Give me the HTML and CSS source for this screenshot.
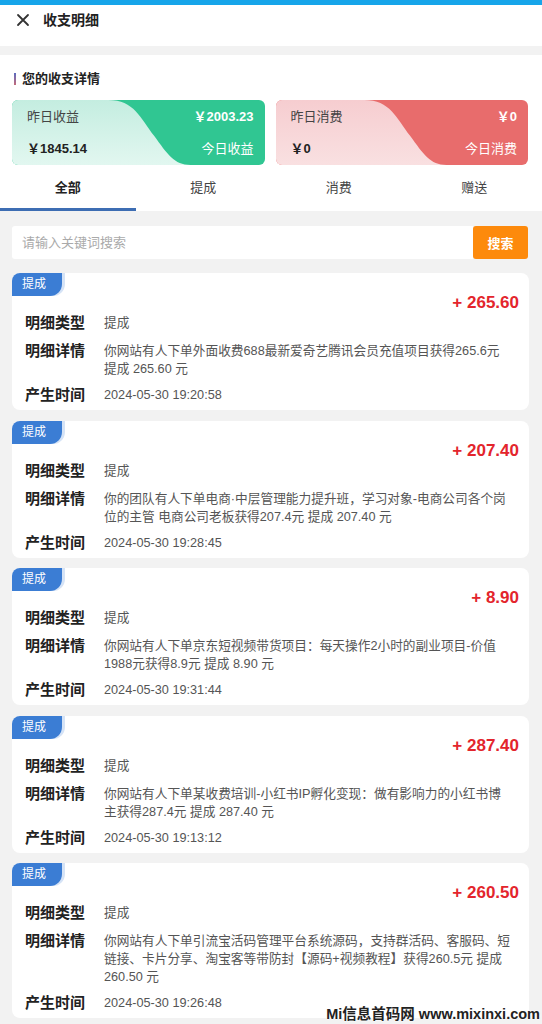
FILE: index.html
```html
<!DOCTYPE html>
<html lang="zh-CN">
<head>
    <meta charset="UTF-8">
    <meta name="viewport" content="width=device-width, initial-scale=1.0">
    <title>收支明细</title>
    <link rel="stylesheet" href="styles.css">
</head>
<body>
    <div class="page">
        <div class="topbar"></div>
        <div class="header">
            <svg class="close-icon" width="14" height="14" viewBox="0 0 14 14">
                <path d="M2 2 L12 12 M12 2 L2 12" stroke="#333" stroke-width="1.8" stroke-linecap="round"/>
            </svg>
            <span class="header-title">收支明细</span>
        </div>

        <!-- summary section -->
        <div class="summary">
            <div class="summary-title">您的收支详情</div>
            <div class="stat-cards">
                <div class="stat-card green">
                    <svg class="stat-bg" viewBox="0 0 252 65" preserveAspectRatio="none">
                        <defs>
                            <linearGradient id="gLight" x1="0" y1="0" x2="0" y2="1">
                                <stop offset="0" stop-color="#c4ede0"/>
                                <stop offset="1" stop-color="#e2f7f0"/>
                            </linearGradient>
                        </defs>
                        <path d="M0 0 H96 C122 0 128 18 142 36 C155 54 162 65 178 65 H0 Z" fill="url(#gLight)"/>
                    </svg>
                    <div class="stat-row">
                        <span class="stat-label">昨日收益</span>
                        <span class="stat-value light">￥2003.23</span>
                    </div>
                    <div class="stat-row">
                        <span class="stat-value">￥1845.14</span>
                        <span class="stat-label light">今日收益</span>
                    </div>
                </div>
                <div class="stat-card red">
                    <svg class="stat-bg" viewBox="0 0 252 65" preserveAspectRatio="none">
                        <defs>
                            <linearGradient id="rLight" x1="0" y1="0" x2="0" y2="1">
                                <stop offset="0" stop-color="#f6cdd0"/>
                                <stop offset="1" stop-color="#f9e0e1"/>
                            </linearGradient>
                        </defs>
                        <path d="M0 0 H88 C114 0 120 18 134 36 C147 54 154 65 170 65 H0 Z" fill="url(#rLight)"/>
                    </svg>
                    <div class="stat-row">
                        <span class="stat-label">昨日消费</span>
                        <span class="stat-value light">￥0</span>
                    </div>
                    <div class="stat-row">
                        <span class="stat-value">￥0</span>
                        <span class="stat-label light">今日消费</span>
                    </div>
                </div>
            </div>
            <div class="tabs">
                <div class="tab active">全部</div>
                <div class="tab">提成</div>
                <div class="tab">消费</div>
                <div class="tab">赠送</div>
            </div>
        </div>

        <!-- search -->
        <div class="search">
            <input type="text" class="search-input" placeholder="请输入关键词搜索">
            <button class="search-btn">搜索</button>
        </div>

        <!-- records -->
        <div class="record">
            <span class="badge">提成</span>
            <div class="amount">+ 265.60</div>
            <div class="row"><span class="label">明细类型</span><span class="value">提成</span></div>
            <div class="row"><span class="label">明细详情</span><span class="value">你网站有人下单外面收费688最新爱奇艺腾讯会员充值项目获得265.6元<br>提成 265.60 元</span></div>
            <div class="row"><span class="label">产生时间</span><span class="value">2024-05-30 19:20:58</span></div>
        </div>

        <div class="record">
            <span class="badge">提成</span>
            <div class="amount">+ 207.40</div>
            <div class="row"><span class="label">明细类型</span><span class="value">提成</span></div>
            <div class="row"><span class="label">明细详情</span><span class="value">你的团队有人下单电商·中层管理能力提升班，学习对象-电商公司各个岗<br>位的主管 电商公司老板获得207.4元 提成 207.40 元</span></div>
            <div class="row"><span class="label">产生时间</span><span class="value">2024-05-30 19:28:45</span></div>
        </div>

        <div class="record">
            <span class="badge">提成</span>
            <div class="amount">+ 8.90</div>
            <div class="row"><span class="label">明细类型</span><span class="value">提成</span></div>
            <div class="row"><span class="label">明细详情</span><span class="value">你网站有人下单京东短视频带货项目：每天操作2小时的副业项目-价值<br>1988元获得8.9元 提成 8.90 元</span></div>
            <div class="row"><span class="label">产生时间</span><span class="value">2024-05-30 19:31:44</span></div>
        </div>

        <div class="record">
            <span class="badge">提成</span>
            <div class="amount">+ 287.40</div>
            <div class="row"><span class="label">明细类型</span><span class="value">提成</span></div>
            <div class="row"><span class="label">明细详情</span><span class="value">你网站有人下单某收费培训-小红书IP孵化变现：做有影响力的小红书博<br>主获得287.4元 提成 287.40 元</span></div>
            <div class="row"><span class="label">产生时间</span><span class="value">2024-05-30 19:13:12</span></div>
        </div>

        <div class="record">
            <span class="badge">提成</span>
            <div class="amount">+ 260.50</div>
            <div class="row"><span class="label">明细类型</span><span class="value">提成</span></div>
            <div class="row"><span class="label">明细详情</span><span class="value">你网站有人下单引流宝活码管理平台系统源码，支持群活码、客服码、短<br>链接、卡片分享、淘宝客等带防封【源码+视频教程】获得260.5元 提成<br>260.50 元</span></div>
            <div class="row"><span class="label">产生时间</span><span class="value">2024-05-30 19:26:48</span></div>
        </div>

        <div class="watermark">Mi信息首码网 www.mixinxi.com</div>
    </div>
</body>
</html>
```

FILE: styles.css
```css
html, body {
    margin: 0;
    padding: 0;
    overflow: hidden;
}

body {
    background-color: #f2f2f2;
    font-family: "Liberation Sans", "Noto Sans CJK SC", sans-serif;
    color: #333;
}

.page {
    position: relative;
    width: 542px;
    height: 1024px;
    overflow: hidden;
}

.topbar {
    height: 5px;
    background-color: #16a5ea;
}

.header {
    height: 41px;
    background-color: #fff;
    display: flex;
    align-items: flex-start;
    padding: 0 16px;
    margin-bottom: 9px;
}

.close-icon {
    margin-top: 8px;
    margin-right: 13px;
}

.header-title {
    font-size: 14px;
    font-weight: bold;
    line-height: 30px;
    color: #222;
}

/* summary block */
.summary {
    background-color: #fff;
    padding-top: 15px;
}

.summary-title {
    font-size: 13px;
    font-weight: bold;
    line-height: 18px;
    color: #222;
    padding-left: 22px;
    position: relative;
}

.summary-title::before {
    content: "";
    position: absolute;
    left: 14px;
    top: 3px;
    width: 2px;
    height: 12px;
    background: linear-gradient(#5a6bc0, #c46a7a);
}

.stat-cards {
    display: flex;
    gap: 11px;
    padding: 0 14px 0 12px;
    margin-top: 12px;
}

.stat-card {
    position: relative;
    flex: 1;
    height: 65px;
    border-radius: 6px;
    overflow: hidden;
    padding: 8px 11px 0 15px;
    box-sizing: border-box;
}

.stat-card.green {
    background-color: #30c692;
}

.stat-card.red {
    background-color: #e86c6c;
}

.stat-bg {
    position: absolute;
    left: 0;
    top: 0;
    width: 100%;
    height: 100%;
}

.stat-row {
    position: relative;
    display: flex;
    justify-content: space-between;
    line-height: 18px;
    margin-bottom: 14px;
}

.stat-label {
    font-size: 13px;
    color: #444;
}

.stat-value {
    font-size: 13px;
    font-weight: bold;
    color: #222;
}

.light {
    color: #fff;
}

.tabs {
    display: flex;
}

.tab {
    flex: 1;
    height: 46px;
    line-height: 46px;
    text-align: center;
    font-size: 13px;
    color: #444;
    box-sizing: border-box;
}

.tab.active {
    font-weight: bold;
    color: #222;
    border-bottom: 3px solid #3d6db3;
}

/* search */
.search {
    display: flex;
    margin: 15px 14px 14px 12px;
    height: 33px;
}

.search-input {
    flex: 1;
    border: none;
    background-color: #fff;
    border-radius: 3px 0 0 3px;
    padding: 0 10px;
    font-size: 13px;
    font-family: inherit;
    outline: none;
}

.search-input::placeholder {
    color: #aaa;
}

.search-btn {
    width: 55px;
    border: none;
    background-color: #fd8a0c;
    color: #fff;
    font-weight: bold;
    font-size: 13px;
    font-family: inherit;
    border-radius: 3px;
}

/* record cards */
.record {
    position: relative;
    background-color: #fff;
    border-radius: 8px;
    margin: 0 13px 10.5px 12px;
    padding: 21px 10px 4px 13px;
}

.badge {
    position: absolute;
    left: 0;
    top: 0;
    width: 50px;
    height: 23px;
    line-height: 23px;
    padding-left: 10px;
    box-sizing: border-box;
    background-color: #3b7dd4;
    color: #fff;
    font-size: 12px;
    border-radius: 8px 0 12px 0;
    box-shadow: 3px 0 0 #d5e3f6;
}

.amount {
    text-align: right;
    font-size: 17px;
    font-weight: bold;
    line-height: 18px;
    color: #e3252c;
}

.row {
    display: flex;
    margin-bottom: 6px;
}

.row:last-child {
    margin-bottom: 0;
}

.label {
    width: 79px;
    flex-shrink: 0;
    font-size: 15px;
    font-weight: bold;
    line-height: 22px;
    color: #222;
}

.value {
    flex: 1;
    font-size: 12.7px;
    line-height: 18px;
    padding-top: 2px;
    color: #555;
    white-space: nowrap;
}

.watermark {
    position: absolute;
    right: 2px;
    bottom: 1px;
    font-size: 14.5px;
    font-weight: bold;
    color: #222;
    text-shadow: 0 0 2px #fff, 0 0 2px #fff;
}
```
